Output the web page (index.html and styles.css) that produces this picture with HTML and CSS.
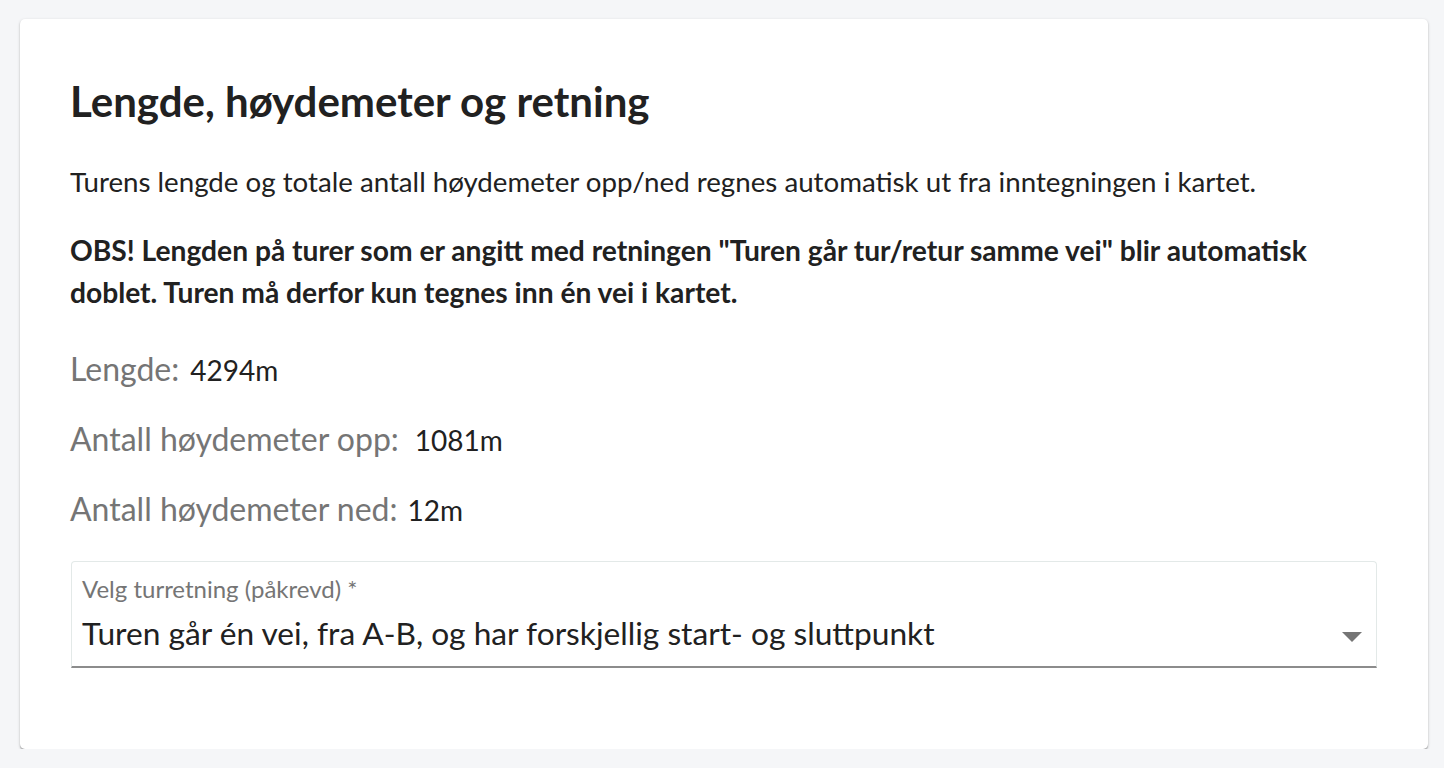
FILE: index.html
```html
<!DOCTYPE html>
<html lang="no">
<head>
<meta charset="utf-8">
<link rel="stylesheet" href="styles.css">
</head>
<body>
<div class="page">
  <section class="card">
    <h2 class="title">Lengde, høydemeter og retning</h2>
    <p class="intro">Turens lengde og totale antall høydemeter opp/ned regnes automatisk ut fra inntegningen i kartet.</p>
    <p class="warn">OBS! Lengden på turer som er angitt med retningen "Turen går tur/retur samme vei" blir automatisk doblet. Turen må derfor kun tegnes inn én vei i kartet.</p>
    <div class="stats">
      <div class="stat"><span class="stat-label">Lengde:</span><span class="stat-value">4294m</span></div>
      <div class="stat"><span class="stat-label">Antall høydemeter opp:</span><span class="stat-value wide">1081m</span></div>
      <div class="stat"><span class="stat-label">Antall høydemeter ned:</span><span class="stat-value narrow">12m</span></div>
    </div>
    <div class="select">
      <div class="select-label">Velg turretning (påkrevd) *</div>
      <div class="select-value">Turen går én vei, fra A-B, og har forskjellig start- og sluttpunkt</div>
      <span class="select-arrow"></span>
    </div>
  </section>
</div>
</body>
</html>
```
FILE: styles.css
```css
html, body {
  margin: 0;
  padding: 0;
  background: #f5f6f8;
  font-family: Lato, "Open Sans", sans-serif;
  color: #212121;
}
.page {
  padding: 19px 16px 0 20px;
}
.card {
  background: #fff;
  border-radius: 5px;
  box-shadow: 0 1px 3px rgba(0,0,0,0.22), 0 1.5px 1px rgba(0,0,0,0.18);
  padding: 57px 50px 81px 50px;
}
.title {
  margin: 0 0 35px 0;
  font-size: 42px;
  font-weight: 700;
  line-height: 50px;
  color: #212121;
}
.intro {
  margin: 0 0 26px 0;
  font-size: 27.7px;
  line-height: 42px;
}
.warn {
  margin: 0 0 21px 0;
  font-size: 28.2px;
  font-weight: 700;
  line-height: 42px;
}
.stats {
  margin-bottom: 17px;
}
.stat {
  font-size: 32px;
  line-height: 70px;
  height: 70px;
}
.stat-label {
  color: #757575;
}
.stat-value {
  font-size: 28px;
  line-height: normal;
  color: #212121;
  margin-left: 11px;
}
.stat-value.wide {
  margin-left: 16px;
}
.stat-value.narrow {
  margin-left: 10px;
}
.select {
  position: relative;
  margin-left: 1px;
  margin-right: 1px;
  border: 1px solid #e3e9e8;
  border-bottom: 2px solid #8c8c8c;
  border-radius: 4px 4px 0 0;
  padding: 13px 11px 13px 10px;
}
.select-label {
  font-size: 24px;
  color: #757575;
  line-height: 28px;
}
.select-value {
  font-size: 31.7px;
  line-height: 40px;
  margin-top: 10px;
  color: #212121;
}
.select-arrow {
  position: absolute;
  right: 14px;
  top: 70px;
  width: 0;
  height: 0;
  border-left: 10px solid transparent;
  border-right: 10px solid transparent;
  border-top: 10px solid #757575;
}
```
